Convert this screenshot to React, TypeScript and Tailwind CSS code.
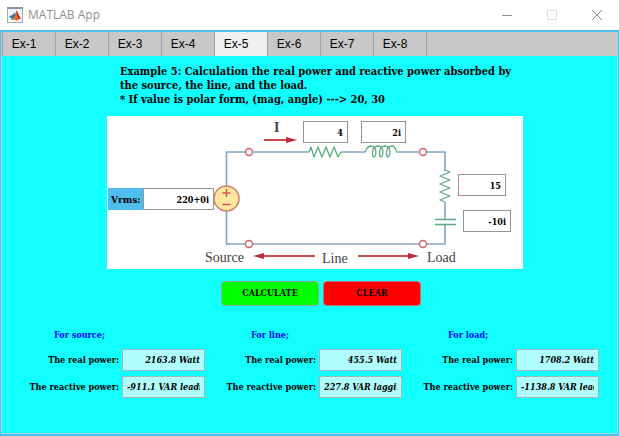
import React, { useState } from "react";

const tabs = ["Ex-1", "Ex-2", "Ex-3", "Ex-4", "Ex-5", "Ex-6", "Ex-7", "Ex-8"];

const results = [
  { name: "source", real: "2163.8 Watt", reactive: "-911.1 VAR leading" },
  { name: "line", real: "455.5 Watt", reactive: "227.8 VAR lagging" },
  { name: "load", real: "1708.2 Watt", reactive: "-1138.8 VAR leading" },
];

const initial = { vrms: "220+0i", lineR: "4", lineX: "2i", loadR: "15", loadX: "-10i" };
type Key = keyof typeof initial;

function MatlabLogo() {
  return (
    <svg className="size-4" viewBox="0 0 16 16" aria-hidden="true">
      <rect x="0.5" y="0.5" width="15" height="15" fill="#f3f5f7" stroke="#a3acb5" />
      <path d="M0 0h16v2H0z" fill="#8795a5" />
      <path d="M2 9.500l3.500-1.800L8 5.500l1 3-3.500 4.500-1.500-1.800z" fill="#3976ad" />
      <path d="M5.500 13L8 8.500 9.300 3.500c1.200.8 2.500 5.500 5 9-1.800-1.300-2.800-.8-4.300 1.500C8.500 12.500 7.500 12 5.500 13z" fill="#e36a20" />
      <path d="M9.300 3.500c1.200.8 2.500 5.500 5 9-1.500-1.200-2.300-1.100-3.100-.4z" fill="#a52c18" />
    </svg>
  );
}

function CircuitDrawing() {
  return (
    <svg className="block h-[153px] w-[416px]" viewBox="0 0 416 153" role="img" aria-label="Source, line and load circuit">
      <g fill="none" stroke="#83a5c5" strokeWidth="1.6">
        <path d="M119.500 71V36H202M234 36H258M290 36H338V55M338 86V103M338 109V128H119.500V94" />
      </g>
      <g fill="none" stroke="#58ac80" strokeWidth="1.300" strokeLinejoin="round">
        <path d="M202 36l2-5 3 10 4-10 4 10 4-10 4 10 4-10 4 10 3-5" />
        <path d="M338 54l5 2-10 4 10 4-10 4 10 4-10 4 10 4-10 4 5 2" />
        <path d="M328 103.500h21M328 108.500h21" />
        <path d="M258 36c1 0 1-6 6-6 7 0 5 11 3 11s-3-11 4-11 5 11 3 11-3-11 4-11 5 11 3 11-3-11 4-11c4 0 4 6 5 6" />
      </g>
      <g fill="#fff" stroke="#d25e68" strokeWidth="1.400">
        <circle cx="142" cy="36" r="3.500" />
        <circle cx="316" cy="36" r="3.500" />
        <circle cx="142" cy="128" r="3.500" />
        <circle cx="316" cy="128" r="3.500" />
      </g>
      <circle cx="119.500" cy="82.500" r="12.500" fill="#ffe7a0" stroke="#d27a68" strokeWidth="1.500" />
      <path d="M115.500 77h8M119.500 73v8M115.500 88.500h8" stroke="#cf5b4c" strokeWidth="1.300" />
      <g stroke="#c74a50" strokeWidth="1.900">
        <path d="M157 24h23M155 140h53M251 140h52" />
      </g>
      <path d="M179 21l11 3-11 3zM157 137l-11 3 11 3zM301 137l11 3-11 3z" fill="#bd2c35" />
      <g fill="#404048" fontFamily="'Liberation Serif', serif" fontSize="14">
        <text x="167" y="16" fontWeight="bold">I</text>
        <text x="98" y="146">Source</text>
        <text x="215" y="147">Line</text>
        <text x="320" y="146">Load</text>
      </g>
    </svg>
  );
}

const fieldStyle =
  "h-[22px] border border-[#949494] bg-white px-1 pt-0.5 text-right text-[9px] font-bold text-black outline-none";
const resultStyle =
  "h-[22px] w-[83px] border border-[#a6b5b5] bg-[#b0ffff] px-1 text-right italic outline-none";

export default function App() {
  const [active, setActive] = useState("Ex-5");
  const [values, setValues] = useState(initial);

  const field = (key: Key, label: string, place: string) => (
    <input
      aria-label={label}
      className={`${fieldStyle} ${place}`}
      value={values[key]}
      onChange={(e) => setValues({ ...values, [key]: e.target.value })}
    />
  );

  return (
    <div className="flex min-h-screen flex-col bg-white font-['DejaVu_Serif_Condensed','DejaVu_Serif',serif] text-black">
      <header className="flex h-[30px] items-center pl-[7px] font-['Open_Sans',sans-serif]">
        <MatlabLogo />
        <h1 className="ml-[5px] flex-1 text-xs text-[#8f8f8f]">MATLAB App</h1>
        <button aria-label="Minimize" className="flex h-7 w-[45px] items-center justify-center">
          <svg className="size-3" viewBox="0 0 12 12" stroke="#8f8f8f"><path d="M1 6.500h10" /></svg>
        </button>
        <button aria-label="Maximize" className="flex h-7 w-[45px] items-center justify-center">
          <svg className="size-3" viewBox="0 0 12 12" fill="none" stroke="#dedede"><path d="M1.500 1.500h9v9h-9z" /></svg>
        </button>
        <button aria-label="Close" className="flex h-7 w-[45px] items-center justify-center">
          <svg className="size-3" viewBox="0 0 12 12" stroke="#8f8f8f"><path d="M1 1l10 10M11 1L1 11" /></svg>
        </button>
      </header>

      <div className="flex flex-1 flex-col border-x border-t-2 border-b-2 border-[#4dbeee]">
        <nav role="tablist" className="flex h-6 bg-[#c8c8c8] pl-px font-['Liberation_Sans',sans-serif] text-xs">
          {tabs.map((tab) => (
            <button
              key={tab}
              role="tab"
              aria-selected={tab === active}
              onClick={() => setActive(tab)}
              className={`w-[53px] border-l border-[#a0a0a0] pr-[10px] last:w-[54px] last:border-r ${tab === active ? "bg-[#f0f0f0]" : ""}`}
            >
              {tab}
            </button>
          ))}
        </nav>

        <main className="flex-1 border-x border-b border-[#a0dfe8] bg-[#12ffff] pt-[9px]">
          <section className="flex flex-col items-center pr-1 pl-[15px]">
            <p className="w-[416px] pl-[13px] text-[11px] leading-[14px] font-bold whitespace-nowrap">
              Example 5: Calculation the real power and reactive power absorbed by
              <br />
              the source, the line, and the load.
              <br />* If value is polar form, (mag, angle) ---&gt; 20, 30
            </p>

            <div className="relative mt-[9px] bg-white">
              <CircuitDrawing />
              <label className="absolute top-[72px] left-px flex h-[22px] items-center bg-[#4dbeee] pl-[3px] text-[10px] font-bold">
                <span className="w-8">Vrms:</span>
                {field("vrms", "Vrms", "w-[71px]")}
              </label>
              {field("lineR", "Line resistance", "absolute top-[5px] left-[196px] w-[45px]")}
              {field("lineX", "Line reactance", "absolute top-[5px] left-[254px] w-[45px]")}
              {field("loadR", "Load resistance", "absolute top-[58px] left-[351px] w-12")}
              {field("loadX", "Load reactance", "absolute top-[94px] left-[356px] w-12")}
            </div>

            <div className="mt-3 flex gap-1 pl-3 text-[9px] font-bold">
              <button className="h-[25px] w-[98px] rounded border border-[#8ba89a] bg-[#00ff00]">CALCULATE</button>
              <button
                className="h-[25px] w-[98px] rounded border border-[#d06a6a] bg-[#ff0000]"
                onClick={() => setValues({ vrms: "", lineR: "", lineX: "", loadR: "", loadX: "" })}
              >
                CLEAR
              </button>
            </div>
          </section>

          <div className="mt-[22px] grid grid-cols-3 pr-[18px] pb-7 pl-[6px] text-[9px] font-bold">
            {results.map((r) => (
              <section key={r.name} className="flex flex-col items-end">
                <h2 className="w-[151px] leading-[14px] text-[#0000ff]">For {r.name};</h2>
                <label className="mt-[7px] flex items-center gap-[3px]">
                  <span className="pt-0.5">The real power:</span>
                  <input readOnly value={r.real} className={resultStyle} />
                </label>
                <label className="mt-[5px] flex items-center gap-[3px]">
                  <span className="pt-0.5">The reactive power:</span>
                  <input readOnly value={r.reactive} className={resultStyle} />
                </label>
              </section>
            ))}
          </div>
        </main>
      </div>
    </div>
  );
}
